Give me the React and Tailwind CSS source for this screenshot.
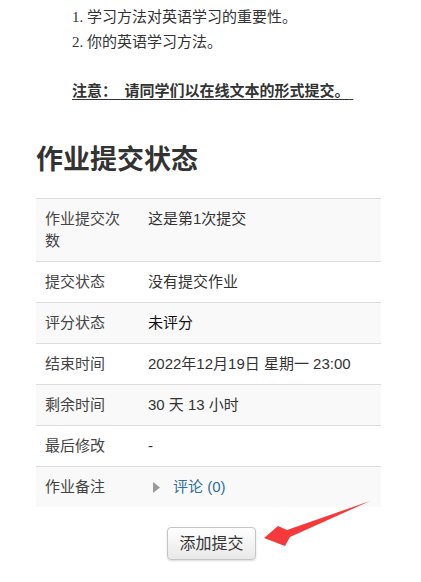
const rows = [
  { label: "作业提交次数", value: "这是第1次提交" },
  { label: "提交状态", value: "没有提交作业" },
  { label: "评分状态", value: "未评分", dark: true },
  { label: "结束时间", value: "2022年12月19日 星期一 23:00" },
  { label: "剩余时间", value: "30 天 13 小时" },
  { label: "最后修改", value: "-" },
  { label: "作业备注", comment: true },
];

export default function App() {
  return (
    <div className="relative min-h-[582px] bg-white pb-6 font-['Liberation_Sans','Noto_Sans_CJK_SC',sans-serif]">
      {/* INTRO TEXT */}
      <div className="pt-[5px] pl-[72px] font-['Liberation_Serif','Noto_Sans_CJK_SC',serif] text-[15px] leading-[25px] text-[#333]">
        <p>1. 学习方法对英语学习的重要性。</p>
        <p>2. 你的英语学习方法。</p>
        <p className="mt-[24px] font-bold underline underline-offset-[3px]">
          注意：{"\u00a0"} 请同学们以在线文本的形式提交。{"\u00a0"}
        </p>
      </div>

      <div className="ml-[36px] w-[345px]">
        <h2 className="mt-[38px] text-[27px] leading-[37px] font-bold text-[#333]">
          作业提交状态
        </h2>

        {/* STATUS TABLE */}
        <div className="mt-[19px] text-[15px] leading-[22px]">
          {rows.map((r, i) => (
            <div
              key={r.label}
              className={`flex border-t border-[#dddddd] ${
                i % 2 === 0 ? "bg-[#f9f9f9]" : "bg-white"
              }`}
            >
              <div className="w-[112px] shrink-0 py-[9px] pl-[9px] pr-[22px] text-[#444]">
                {r.label}
              </div>
              <div
                className={`flex-1 py-[9px] pr-2 ${
                  r.dark ? "text-[#111]" : "text-[#333]"
                }`}
              >
                {r.comment ? (
                  <span className="flex items-center">
                    <svg width="8" height="11" viewBox="0 0 8 11" className="mr-[12px] ml-[5px]">
                      <path d="M0 0 L7 5.5 L0 11 Z" fill="#999" />
                    </svg>
                    <span className="text-[#2f6e9f]">评论 (0)</span>
                  </span>
                ) : (
                  r.value
                )}
              </div>
            </div>
          ))}
        </div>

        {/* BUTTON */}
        <div className="mt-[20px] flex justify-center pl-[6px]">
          <button className="h-[33px] w-[89px] rounded-[4px] border border-[#c4c4c4] bg-gradient-to-b from-white to-[#e8e8e8] text-[16px] text-[#333] shadow-[0_1px_2px_rgba(0,0,0,0.15)]">
            添加提交
          </button>
        </div>
      </div>

      {/* RED ARROW */}
      <svg
        className="absolute left-0 top-0"
        width="421"
        height="582"
        viewBox="0 0 421 582"
        pointerEvents="none"
      >
        <polygon
          points="264,538 285,546 290,537 370,501 287,530 278,526"
          fill="#f43a3a"
        />
      </svg>
    </div>
  );
}
